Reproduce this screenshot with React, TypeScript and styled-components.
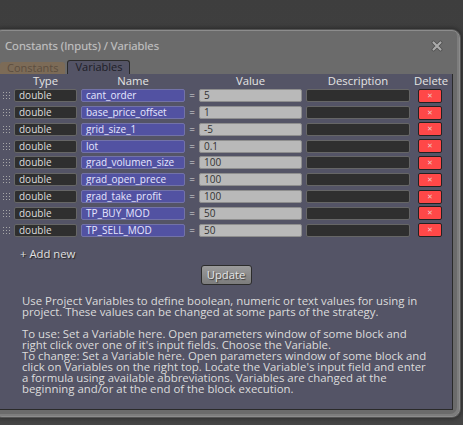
import { Fragment } from "react"
import styled, { createGlobalStyle } from "styled-components"

const GlobalStyle = createGlobalStyle`
    html, body {
        margin: 0;
        padding: 0;
        background: #414141;
    }
    body {
        font-family: "Open Sans", "Noto Sans", sans-serif;
    }
`

const Page = styled.div`
    width: 463px;
    height: 425px;
    overflow: hidden;
    padding-top: 30px;
    box-sizing: border-box;
    background: linear-gradient(#3e3e3e, #454545);
`

const Window = styled.div`
    margin-left: -6px;
    width: 466px;
    box-sizing: border-box;
    background: #6b6b6b;
    border: 1px solid #8c8c8c;
    border-radius: 8px;
    padding: 0 6px 6px 4px;
    box-shadow: 0 0 0 1px #555, 0 0 4px 2px rgba(0, 0, 0, 0.35), inset -2px -2px 0 #7d7d7d;
`

const TitleBar = styled.div`
    display: flex;
    align-items: center;
    justify-content: space-between;
    height: 29px;
    padding: 0 10px 0 6px;
    font-size: 11.3px;
    color: #c2c2c2;
    text-shadow: 0 0 1px rgba(200, 200, 200, 0.4);
`

const TabStrip = styled.div`
    display: flex;
    align-items: flex-end;
    gap: 2px;
    padding-left: 1px;
    height: 14px;
`

const Tab = styled.div<{ $active?: boolean }>`
    height: ${p => (p.$active ? 14 : 12)}px;
    line-height: 12px;
    box-sizing: border-box;
    padding: 0 7px;
    font-size: 11px;
    border-radius: 3px 3px 0 0;
    background: ${p => (p.$active ? "#545466" : "#7c6b57")};
    color: ${p => (p.$active ? "#1d1d26" : "#5c4e3f")};
    border: ${p => (p.$active ? "1px solid #2a2a2a" : "none")};
    border-bottom: none;
`

const Panel = styled.div`
    background: #545466;
    border: 1px solid #2a2a2a;
    border-top: none;
    padding-bottom: 15px;
`

const Grid = styled.div`
    display: grid;
    grid-template-columns: 10px 63px 104px 6px 103px 104px 28px;
    column-gap: 4px;
    row-gap: 2.8px;
    align-items: center;
`

const HeadCell = styled.div<{ $align?: string }>`
    height: 14px;
    line-height: 14px;
    font-size: 11.3px;
    color: #e4e4e4;
    text-align: ${p => p.$align || "center"};
    margin-bottom: -2px;
`

const Handle = styled.div`
    width: 9px;
    height: 9px;
    margin-left: 2px;
    background-image: radial-gradient(circle, #a8a8a8 0.7px, transparent 1px);
    background-size: 3px 3px;
`

const Field = styled.div<{ $kind: "dark" | "name" | "value" }>`
    height: 13px;
    box-sizing: border-box;
    border-radius: 2px;
    padding-left: 4px;
    font-size: 10px;
    line-height: 11px;
    white-space: nowrap;
    overflow: hidden;
    background: ${p => (p.$kind === "name" ? "#5252a2" : p.$kind === "value" ? "#b9b9b9" : "#2f2f2f")};
    border: 1px solid ${p => (p.$kind === "name" ? "#7272a8" : p.$kind === "value" ? "#8e8e8e" : "#666")};
    color: ${p => (p.$kind === "name" ? "#e6e6ff" : p.$kind === "value" ? "#333" : "#dedede")};
`

const Equals = styled.div`
    font-size: 10px;
    color: #ddd;
    text-align: center;
    line-height: 13px;
`

const DeleteButton = styled.div`
    justify-self: end;
    width: 24px;
    height: 14px;
    box-sizing: border-box;
    background: #ff4848;
    border: 1px solid #222;
    border-radius: 2px;
    color: #efc6c6;
    font-size: 7px;
    line-height: 12px;
    text-align: center;
`

const AddNew = styled.div`
    margin: 11px 0 0 20px;
    font-size: 11.3px;
    line-height: 12px;
    color: #e0e0e0;
    text-shadow: 1px 1px 1px #222;
`

const ButtonRow = styled.div`
    display: flex;
    justify-content: center;
    margin-top: 5px;
`

const UpdateButton = styled.div`
    width: 51px;
    height: 20px;
    box-sizing: border-box;
    border: 1px solid #2c2c2c;
    border-radius: 3px;
    background: linear-gradient(#9b9b9b, #7c7c7c);
    color: #e6e6e6;
    font-size: 11.3px;
    line-height: 18px;
    text-align: center;
    text-shadow: 1px 1px 1px #333;
`

const Help = styled.div`
    margin: 10px 0 0 22px;
    font-size: 11.4px;
    line-height: 11px;
    color: #dcdcdc;
    white-space: nowrap;
    & p {
        margin: 0;
    }
    & p + p {
        margin-top: 11px;
    }
`

const vars = [
    ["cant_order", "5"],
    ["base_price_offset", "1"],
    ["grid_size_1", "-5"],
    ["lot", "0.1"],
    ["grad_volumen_size", "100"],
    ["grad_open_prece", "100"],
    ["grad_take_profit", "100"],
    ["TP_BUY_MOD", "50"],
    ["TP_SELL_MOD", "50"],
]

const CloseIcon = () => (
    <svg width="12" height="12" viewBox="0 0 12 12">
        <path d="M2.5 2.5 L9.5 9.5 M9.5 2.5 L2.5 9.5" stroke="#4e4e4e" strokeWidth="3.8" strokeLinecap="round" />
        <path d="M2.5 2.5 L9.5 9.5 M9.5 2.5 L2.5 9.5" stroke="#aaaaaa" strokeWidth="2.2" strokeLinecap="round" />
    </svg>
)

const App = () => {
    return (
        <>
            <GlobalStyle />
            <Page>
                <Window>
                    <TitleBar>
                        <span>Constants (Inputs) / Variables</span>
                        <CloseIcon />
                    </TitleBar>
                    <TabStrip>
                        <Tab>Constants</Tab>
                        <Tab $active>Variables</Tab>
                    </TabStrip>
                    <Panel>
                        <Grid>
                            <HeadCell />
                            <HeadCell>Type</HeadCell>
                            <HeadCell>Name</HeadCell>
                            <HeadCell />
                            <HeadCell>Value</HeadCell>
                            <HeadCell>Description</HeadCell>
                            <HeadCell $align="right">Delete</HeadCell>
                            {vars.map(([name, value]) => (
                                <Fragment key={name}>
                                    <Handle />
                                    <Field $kind="dark">double</Field>
                                    <Field $kind="name">{name}</Field>
                                    <Equals>=</Equals>
                                    <Field $kind="value">{value}</Field>
                                    <Field $kind="dark" />
                                    <DeleteButton>✕</DeleteButton>
                                </Fragment>
                            ))}
                        </Grid>
                        <AddNew>+ Add new</AddNew>
                        <ButtonRow>
                            <UpdateButton>Update</UpdateButton>
                        </ButtonRow>
                        <Help>
                            <p>
                                Use Project Variables to define boolean, numeric or text values for using in
                                <br />
                                project. These values can be changed at some parts of the strategy.
                            </p>
                            <p>
                                To use: Set a Variable here. Open parameters window of some block and
                                <br />
                                right click over one of it's input fields. Choose the Variable.
                                <br />
                                To change: Set a Variable here. Open parameters window of some block and
                                <br />
                                click on Variables on the right top. Locate the Variable's input field and enter
                                <br />
                                a formula using available abbreviations. Variables are changed at the
                                <br />
                                beginning and/or at the end of the block execution.
                            </p>
                        </Help>
                    </Panel>
                </Window>
            </Page>
        </>
    )
}

export default App
